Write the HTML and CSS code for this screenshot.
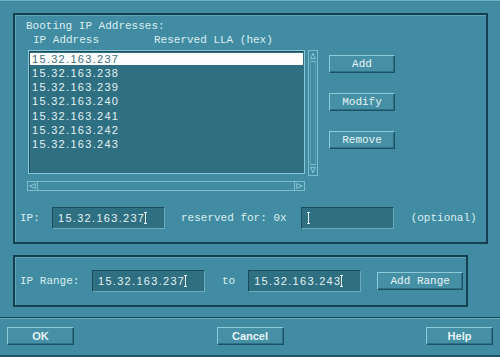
FILE: index.html
```html
<!DOCTYPE html>
<html lang="en">
<head>
<meta charset="UTF-8">
<title>Booting IP Addresses</title>
<link rel="stylesheet" href="styles.css">
</head>
<body>
<div class="window">

<!-- list of booting addresses -->
<div class="panel top">
<div class="label heading">Booting IP Addresses:</div>
<div class="label cols"><span class="col-ip">IP Address</span><span>Reserved LLA (hex)</span></div>

<div class="list-row">
<div class="list-area">
<div class="listbox">
<div class="row sel">15.32.163.237</div>
<div class="row">15.32.163.238</div>
<div class="row">15.32.163.239</div>
<div class="row">15.32.163.240</div>
<div class="row">15.32.163.241</div>
<div class="row">15.32.163.242</div>
<div class="row">15.32.163.243</div>
</div>
<div class="vscroll">
<svg class="arrow" width="10" height="11" viewBox="0 0 10 11"><path d="M2 9 L5 2 L8 9 Z" fill="none" stroke="#9fd3df" stroke-width="1"/></svg>
<div class="track"></div>
<svg class="arrow" width="10" height="11" viewBox="0 0 10 11"><path d="M2 2 L5 9 L8 2 Z" fill="none" stroke="#9fd3df" stroke-width="1"/></svg>
</div>
<div class="hscroll">
<svg class="arrow" width="11" height="10" viewBox="0 0 11 10"><path d="M9 2 L2 5 L9 8 Z" fill="none" stroke="#9fd3df" stroke-width="1"/></svg>
<div class="track"></div>
<svg class="arrow" width="11" height="10" viewBox="0 0 11 10"><path d="M2 2 L9 5 L2 8 Z" fill="none" stroke="#9fd3df" stroke-width="1"/></svg>
</div>
</div>
<div class="side-buttons">
<button class="btn mono">Add</button>
<button class="btn mono">Modify</button>
<button class="btn mono">Remove</button>
</div>
</div>

<div class="field-row ip-row">
<span class="label lbl-ip">IP:</span>
<div class="field w-ip"><span class="val">15.32.163.237</span><span class="ibeam"></span></div>
<span class="label lbl-res">reserved for: 0x</span>
<div class="field w-res"><span class="ibeam"></span></div>
<span class="label lbl-opt">(optional)</span>
</div>
</div>

<!-- range entry -->
<div class="panel range">
<div class="field-row">
<span class="label lbl-range">IP Range:</span>
<div class="field w-ip"><span class="val">15.32.163.237</span><span class="ibeam"></span></div>
<span class="label lbl-to">to</span>
<div class="field w-ip"><span class="val">15.32.163.243</span><span class="ibeam"></span></div>
<button class="btn mono wide">Add Range</button>
</div>
</div>

<div class="divider"></div>

<div class="footer">
<button class="btn bold">OK</button>
<button class="btn bold">Cancel</button>
<button class="btn bold">Help</button>
</div>

</div>
</body>
</html>
```

FILE: styles.css
```css
body { margin:0; background:#418ca2; }
.window { width:500px; height:357px; background:#418ca2; box-sizing:border-box; border-top:1px solid #6fb0c2; border-bottom:2px solid #1d5466; color:#d9eef1; }

.label { font-family:'Liberation Mono', monospace; font-size:11px; line-height:13px; color:#d9eef1; white-space:pre; }

.panel { border:2px solid #133f50; box-shadow:inset 1px 1px 0 #5fa4b7; box-sizing:border-box; }
.panel.top { width:475px; height:231px; margin:12px 0 0 13px; padding:5px 0 0 11px; }
.panel.range { width:455px; height:52px; margin:11px 0 0 13px; padding:13px 0 0 5px; }

.cols { padding-left:7px; margin-top:1px; display:flex; }
.col-ip { width:121px; }

.list-row { display:flex; margin-top:3px; margin-left:2px; }
.list-area { display:grid; grid-template-columns:277px 10px; column-gap:3px; row-gap:5px; }

.listbox { height:124px; box-sizing:border-box; background:#2f6f82; border:1px solid #8cc6d4; box-shadow:inset 1px 1px 0 #1b4f60; padding:2px 1px; }
.row { font-family:'Liberation Sans', sans-serif; font-size:11px; line-height:14.2px; letter-spacing:1.3px; padding-left:2px; color:#e2f2f4; }
.row.sel { background:#fdfdfd; color:#3b6f7e; line-height:12px; margin-bottom:1px; }

.vscroll { height:126px; display:flex; flex-direction:column; border:1px solid #7fbccb; box-sizing:border-box; }
.vscroll .track { flex:1; border-top:1px solid #7fbccb; border-bottom:1px solid #7fbccb; margin:0 1px; border-left:1px solid #5a9fb2; border-right:1px solid #5a9fb2; }
.hscroll { height:10px; display:flex; border:1px solid #7fbccb; box-sizing:border-box; margin-left:-1px; }
.hscroll .track { flex:1; border-left:1px solid #7fbccb; border-right:1px solid #7fbccb; }
.arrow { display:block; flex:none; }
.hscroll .arrow { width:9px; height:8px; }
.vscroll .arrow { width:8px; height:10px; }

.side-buttons { display:flex; flex-direction:column; gap:20px; margin:5px 0 0 11px; }

.btn { background:#4690a6; border:1px solid; border-color:#8ccbd9 #1c5265 #1c5265 #8ccbd9; box-shadow:inset -1px -1px 0 #2f7085; width:66px; height:18px; padding:0; color:#e4f3f5; cursor:pointer; }
.btn.mono { font-family:'Liberation Mono', monospace; font-size:11px; }
.btn.bold { font-family:'Liberation Sans', sans-serif; font-size:11px; font-weight:bold; }
.btn.wide { width:86px; margin-left:16px; }

.field-row { display:flex; align-items:center; }
.ip-row { margin:16px 0 0 -6px; }
.field { height:22px; box-sizing:border-box; background:#2f6f82; border:1px solid; border-color:#1a4c5d #6aaabb #6aaabb #1a4c5d; display:flex; align-items:center; padding-left:5px; }
.field .val { font-family:'Liberation Sans', sans-serif; font-size:11px; letter-spacing:1.3px; color:#e2f2f4; margin-right:-1px; }
.w-ip { width:113px; }
.w-res { width:93px; }
.ibeam { width:3px; height:12px; box-sizing:border-box; border-top:1px solid #e8f6f8; border-bottom:1px solid #e8f6f8; background:linear-gradient(#e8f6f8,#e8f6f8) center/1px 100% no-repeat; }
.lbl-ip { width:32px; }
.lbl-res { margin:0 14px 0 16px; }
.lbl-opt { margin-left:17px; }
.lbl-range { width:72px; }
.lbl-to { margin:0 13px 0 17px; }

.divider { margin-top:10px; border-top:1px solid #16485a; border-bottom:1px solid #67a9bb; }
.footer { display:flex; justify-content:space-between; padding:8px 7px 0 7px; }
.footer .btn { width:67px; }
```
